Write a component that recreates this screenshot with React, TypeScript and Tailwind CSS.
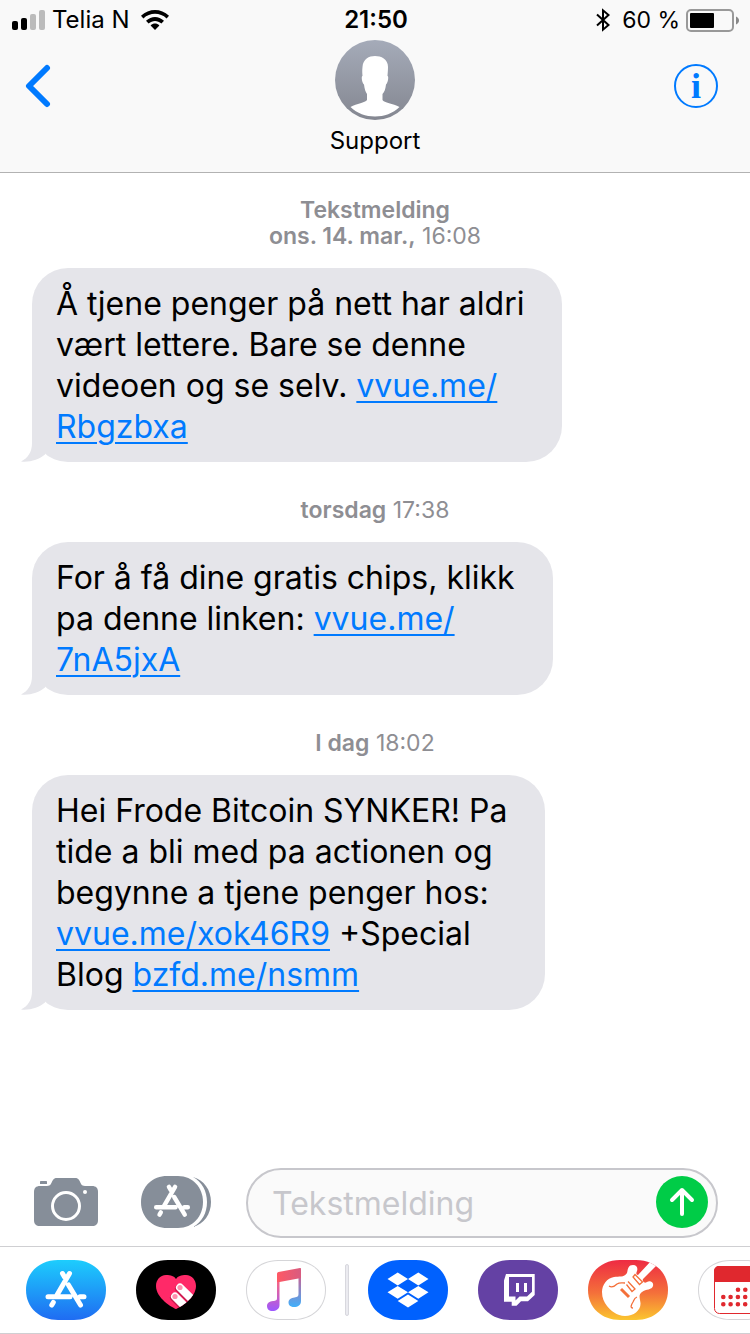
import React from 'react';

interface Message {
  id: number;
  label?: string;
  day: string;
  time: string;
  body: React.ReactNode;
}

const Link: React.FC<{ children: React.ReactNode }> = ({ children }) => (
  <a href="#" className="text-[#007aff] underline decoration-2 underline-offset-4">{children}</a>
);

const messages: Message[] = [
  {
    id: 1,
    label: 'Tekstmelding',
    day: 'ons. 14. mar.,',
    time: '16:08',
    body: (
      <>
        Å tjene penger på nett har aldri<br />
        vært lettere. Bare se denne<br />
        videoen og se selv. <Link>vvue.me/<br />Rbgzbxa</Link>
      </>
    ),
  },
  {
    id: 2,
    day: 'torsdag',
    time: '17:38',
    body: (
      <>
        For å få dine gratis chips, klikk<br />
        pa denne linken: <Link>vvue.me/<br />7nA5jxA</Link>
      </>
    ),
  },
  {
    id: 3,
    day: 'I dag',
    time: '18:02',
    body: (
      <>
        Hei Frode Bitcoin SYNKER! Pa<br />
        tide a bli med pa actionen og<br />
        begynne a tjene penger hos:<br />
        <Link>vvue.me/xok46R9</Link> +Special<br />
        Blog <Link>bzfd.me/nsmm</Link>
      </>
    ),
  },
];

const StatusBar: React.FC = () => (
  <div className="grid h-10 grid-cols-[1fr_auto_1fr] items-center pl-3 pr-2.5 text-2xl text-black">
    <div className="flex items-center gap-[7px]">
      <svg width="33" height="20" viewBox="0 0 33 20" aria-label="Signal">
        <rect x="0" y="11" width="6" height="9" rx="2" />
        <rect x="9" y="8" width="6" height="12" rx="2" />
        <rect x="18" y="4" width="6" height="16" rx="2" fill="#bbb" />
        <rect x="27" y="0" width="6" height="20" rx="2" fill="#bbb" />
      </svg>
      <span>Telia N</span>
      <svg className="ml-1" width="28" height="20" viewBox="0 0 28 20" aria-label="Wi-Fi">
        <path d="M0 5.7C8-1.9 20-1.9 28 5.7L25.6 8.4C19 2.2 9 2.2 2.4 8.4Z" />
        <path d="M5 10.8C10.4 5.7 17.6 5.7 23 10.8L20.4 13.5C16.6 10 11.4 10 7.6 13.5Z" />
        <path d="M9.6 15.4C12.4 13 15.6 13 18.4 15.4L14 20Z" />
      </svg>
    </div>
    <span className="font-semibold">21:50</span>
    <div className="flex items-center justify-end gap-1.5 text-[23px]">
      <svg className="mr-1.5" width="14" height="24" viewBox="0 0 14 24" fill="none" stroke="#000" strokeWidth="2" aria-label="Bluetooth">
        <path d="M1 6.5L12.5 17L7 21.7V2.3L12.5 7L1 17.5" />
      </svg>
      <span>60 %</span>
      <svg width="54" height="24" viewBox="0 0 54 24" aria-label="Batteri">
        <rect x="1" y="2" width="46" height="21" rx="4" fill="none" stroke="#999" strokeWidth="2" />
        <rect x="4" y="5" width="24" height="15" rx="1" />
        <path d="M50 8.500C54 10 54 15 50 16.500Z" fill="#888" />
      </svg>
    </div>
  </div>
);

const Header: React.FC = () => (
  <header className="border-b border-[#b2b2b2] bg-[#f9f9f9]">
    <StatusBar />
    <div className="grid h-33 grid-cols-[1fr_auto_1fr] items-start">
      <button type="button" aria-label="Tilbake" className="ml-6 mt-6 w-fit">
        <svg width="28" height="44" viewBox="0 0 28 44" fill="none" stroke="#007aff" strokeWidth="6" strokeLinecap="round" strokeLinejoin="round">
          <path d="M23 4L5 22L23 40" />
        </svg>
      </button>
      <div className="flex flex-col items-center">
        <svg width="80" height="80" viewBox="0 0 80 80">
          <defs>
            <linearGradient id="avatar" x1="0" y1="0" x2="0" y2="1">
              <stop offset="0" stopColor="#a5abb9" />
              <stop offset="1" stopColor="#848791" />
            </linearGradient>
          </defs>
          <circle cx="40" cy="40" r="40" fill="url(#avatar)" />
          <path
            fill="#fff"
            d="M40 16C46 16 53 19 53 27C53 31 52.600 34 52.500 36C54 36 53 43 51 44.500C50.500 49 49.500 52 47.500 54V60C49 63 58 63.500 64.500 67C58 73.500 49 76.500 40 76.500C31 76.500 22 73.500 15.500 67C22 63.500 30 63 32 60V54C30.500 52 29.500 49 29 44.500C27 43 26 36 27.500 36C27.400 34 27 31 27.500 27C28 19 34 16 40 16Z"
          />
        </svg>
        <h1 className="mt-[5px] text-2xl leading-8">Support</h1>
      </div>
      <button
        type="button"
        aria-label="Informasjon"
        className="mr-8 mt-6 flex h-11 w-11 items-center justify-center justify-self-end rounded-full border-2 border-[#007aff] font-['Liberation_Serif',serif] text-4xl leading-10 font-bold text-[#007aff]"
      >
        i
      </button>
    </div>
  </header>
);

const Bubble: React.FC<{ children: React.ReactNode }> = ({ children }) => (
  <div className="relative ml-8 w-fit rounded-[36px] bg-[#e5e5ea] py-[15px] pl-6 pr-[38px]">
    <svg className="absolute -left-3 bottom-0" width="36" height="36" viewBox="0 0 36 36">
      <path fill="#e5e5ea" d="M12 0V17C12 26 8 32 1 35.500C10 36.500 19 33.500 25 28.500V0Z" />
    </svg>
    <p className="relative text-[32px] leading-[41px] text-black">{children}</p>
  </div>
);

// The "A" made of three rounded sticks, drawn on an 80x60 grid
const StoreSticks: React.FC = () => (
  <g fill="none" stroke="#fff" strokeWidth="5" strokeLinecap="round">
    <path d="M43.500 13.500L31 35M36.500 13.500L38.500 17M42.500 25L54.500 45M22 36.700H44M54 36.700H58M27.300 42.500L25.800 45" />
  </g>
);

const PILL = 'M0 30C0 12 14 0 32 0H48C66 0 80 12 80 30C80 48 66 60 48 60H32C14 60 0 48 0 30Z';

const AppButton: React.FC<{ name: string; fill: string; outlined?: boolean; children: React.ReactNode }> = ({ name, fill, outlined, children }) => (
  <button type="button" aria-label={name} className="shrink-0">
    <svg width="80" height="60" viewBox="0 0 80 60">
      <defs>
        <linearGradient id="store" x1="0" y1="0" x2="0" y2="1">
          <stop offset="0" stopColor="#1dcdfd" />
          <stop offset="1" stopColor="#1f6cf2" />
        </linearGradient>
        <linearGradient id="garage" x1="0" y1="0" x2="0" y2="1">
          <stop offset="0" stopColor="#ee2b43" />
          <stop offset="0.550" stopColor="#f4703a" />
          <stop offset="1" stopColor="#fbc62f" />
        </linearGradient>
        <linearGradient id="noteLeft" x1="0" y1="10" x2="0" y2="51" gradientUnits="userSpaceOnUse">
          <stop offset="0" stopColor="#ff5661" />
          <stop offset="0.350" stopColor="#f0648e" />
          <stop offset="1" stopColor="#9c58ff" />
        </linearGradient>
        <linearGradient id="noteRight" x1="0" y1="8" x2="0" y2="47" gradientUnits="userSpaceOnUse">
          <stop offset="0" stopColor="#e8566d" />
          <stop offset="0.350" stopColor="#b070a8" />
          <stop offset="1" stopColor="#40b0fc" />
        </linearGradient>
        <linearGradient id="noteBeam" x1="0" y1="0" x2="1" y2="0">
          <stop offset="0" stopColor="#ff5864" />
          <stop offset="1" stopColor="#d85c80" />
        </linearGradient>
        <clipPath id="pill"><path d={PILL} /></clipPath>
        <clipPath id="heart"><path d="M40 49C36 47.500 20 38 20 26C20 20 24 15 30 15C35 15 38 16 40 19C42 16 45 15 50 15C56 15 60 20 60 26C60 38 44 47.500 40 49Z" /></clipPath>
      </defs>
      <path d={PILL} fill={outlined ? '#d5d5d8' : fill} />
      {outlined && <path d={PILL} fill={fill} transform="translate(1 1) scale(.975 .967)" />}
      {children}
    </svg>
  </button>
);

const AppStrip: React.FC = () => (
  <nav aria-label="Apper" className="flex items-center gap-[30px] overflow-hidden border-y border-[#cfcfd2] py-[13px] pl-[26px]">
    <AppButton name="App Store" fill="url(#store)"><StoreSticks /></AppButton>
    <AppButton name="Digital Touch" fill="#000">
      <g clipPath="url(#heart)">
        <rect width="80" height="60" fill="#ff2968" />
        <g stroke="#c81c4e" strokeWidth="8" strokeLinecap="round">
          <path d="M43 28.500L60 45.500M38 37.500L54 53.500" />
        </g>
        <g stroke="#fff" strokeWidth="8" strokeLinecap="round">
          <path d="M44 27.500L61 44.500M39 36.500L55 52.500" />
        </g>
        <circle cx="44" cy="27.500" r="2.600" fill="#ff8fae" />
        <circle cx="39" cy="36.500" r="2.600" fill="#ff8fae" />
      </g>
    </AppButton>
    <AppButton name="Musikk" fill="#fff" outlined>
      <path fill="url(#noteLeft)" d="M31 14H33.500V45C33.500 49 30 51 26.500 51C23 51 21 49 21 46C21 43 23.500 41.500 27 41C30 40.700 31 40.500 31 38Z" />
      <path fill="url(#noteRight)" d="M52.500 10H55V41C55 45 52 47 48 47C45 47 42.500 45.500 42.500 42.500C42.500 39.500 45 38 48.500 37.500C51.500 37 52.500 36.500 52.500 34Z" />
      <path fill="url(#noteBeam)" d="M31 14C31 12.800 31.500 12.300 32.500 12L54 8C54.800 7.800 55 8.200 55 9V18L33.500 22H31Z" />
    </AppButton>
    <div className="-mx-[11px] h-13 w-1 shrink-0 rounded-sm border border-[#d8d8de] bg-[#ebebf0]" />
    <AppButton name="Dropbox" fill="#0061fe">
      <path fill="#fff" d="M29.700 12.500L40 19L29.700 25.500L19.500 19ZM50.300 12.500L60.500 19L50.300 25.500L40 19ZM29.700 26L40 32.300L29.700 38.800L19.500 32.300ZM50.300 26L60.500 32.300L50.300 38.800L40 32.300ZM40 34.500L50.300 41L40 47.500L29.700 41Z" />
    </AppButton>
    <AppButton name="Twitch" fill="#6441a4">
      <path fill="#fff" fillRule="evenodd" d="M28 14H56.700V35L50 41.300H43L38.500 45.800H33.700V41.700H26V20.500ZM31 17V36.500H37.500V40.500L41.500 36.500H49L54 31.800V17ZM38 23H41V32H38ZM46 23H49V32H46Z" />
    </AppButton>
    <AppButton name="GarageBand" fill="url(#garage)">
      <g clipPath="url(#pill)">
        <path
          fill="#fff"
          d="M14 32C14 25 19 18 26 17C31 16 36 18 39 13C40 9 40 5 45 5C49 5 50 8 49 11C48 13 48 15 50 15L63 1L68 6L55 19C54 21 56 24 59 22C62 20 66 22 65 26C64 30 58 29 54 32C50 35 52 38 52.500 43C53 50 46 56 37 56C29 56 22 50 19 46C16 42 14 38 14 32Z"
        />
        <g fill="none" stroke="#f4703a" strokeWidth="1.300">
          <path d="M47 14.500L54.500 22L51.500 24.500L45 17ZM40 21.500L47 29L44 31.500L38.500 24.500" />
          <path d="M21 26C24 28 27 26 29 24C32 22 34 23 37 23M45 48C42 48 43 45 45 42C46 40 46 38 49 37" />
          <path d="M33 29L41 37" strokeWidth="3" />
        </g>
      </g>
    </AppButton>
    <AppButton name="Kalender" fill="#fff" outlined>
      <rect x="16.500" y="6.500" width="47" height="47" rx="5" fill="#fff" stroke="#e0282e" />
      <path fill="#e0282e" d="M16 22V11C16 8 18 6 21 6H59C62 6 64 8 64 11V22Z" />
      <path stroke="#e0282e" strokeWidth="4.600" strokeLinecap="round" strokeDasharray="0 7.300" d="M40 29.700H60M25.300 37H60M25.300 44.300H60" />
    </AppButton>
  </nav>
);

const Composer: React.FC = () => (
  <form className="flex items-center pb-2 pl-[34px] pr-8" onSubmit={(e) => e.preventDefault()}>
    <button type="button" aria-label="Kamera" className="mb-0.5 shrink-0">
      <svg width="64" height="48" viewBox="0 0 64 48" fill="#868e99">
        <path d="M6 8H13C17 8 17 5 19 2C20 .5 21 0 23 0H41C43 0 44 .5 45 2C47 5 47 8 51 8H58C62 8 64 10 64 14V42C64 46 62 48 58 48H6C2 48 0 46 0 42V14C0 10 2 8 6 8Z" />
        <path d="M6 6V4C6 3.300 6.300 3 7 3H12C12.700 3 13 3.300 13 4V6Z" />
        <circle cx="32" cy="28" r="13.500" fill="none" stroke="#fff" strokeWidth="3" />
        <circle cx="51" cy="14" r="2" fill="#fff" />
      </svg>
    </button>
    <button type="button" aria-label="Vis apper" className="mb-0.5 ml-[43px] shrink-0">
      <svg width="70" height="52" viewBox="0 0 70 52" fill="#868e99">
        <path d="M0 26C0 10 12 0 26 0H37C52 0 62 12 62 26C62 40 52 52 37 52H26C12 52 0 42 0 26Z" />
        <path d="M52 1C63 4 70 14 70 26C70 38 63 48 52 51C61 46 66 37 66 26C66 15 61 6 52 1Z" />
        <g transform="translate(-4.200 -1) scale(.88)"><StoreSticks /></g>
      </svg>
    </button>
    <div className="ml-[35px] flex h-[70px] min-w-0 flex-1 items-center rounded-full border-2 border-[#c7c7cc] bg-[#fafafa] pl-6 pr-2">
      <input
        type="text"
        aria-label="Tekstmelding"
        placeholder="Tekstmelding"
        className="min-w-0 flex-1 bg-transparent text-[32px] leading-[41px] outline-none placeholder:text-[#c7c7cc]"
      />
      <button type="submit" aria-label="Send" className="mb-0.5 shrink-0 rounded-full bg-[#00cc47]">
        <svg width="52" height="52" viewBox="0 0 52 52" fill="none" stroke="#fff" strokeWidth="4" strokeLinecap="round" strokeLinejoin="round">
          <path d="M26 38V14M16 24L26 14L36 24" />
        </svg>
      </button>
    </div>
  </form>
);

const App: React.FC = () => {
  return (
    <div className="flex min-h-screen flex-col bg-white font-[Inter,'Liberation_Sans',sans-serif] text-black">
      <Header />
      <main className="flex-1 pt-6">
        {messages.map((m) => (
          <section key={m.id} className="mb-[35px]">
            <div className="mb-[19px] text-center text-[23px] leading-[26px] text-[#8e8e93]">
              {m.label && <div className="font-semibold">{m.label}</div>}
              <span className="font-semibold">{m.day}</span> {m.time}
            </div>
            <Bubble>{m.body}</Bubble>
          </section>
        ))}
      </main>
      <Composer />
      <AppStrip />
    </div>
  );
};

export default App;
